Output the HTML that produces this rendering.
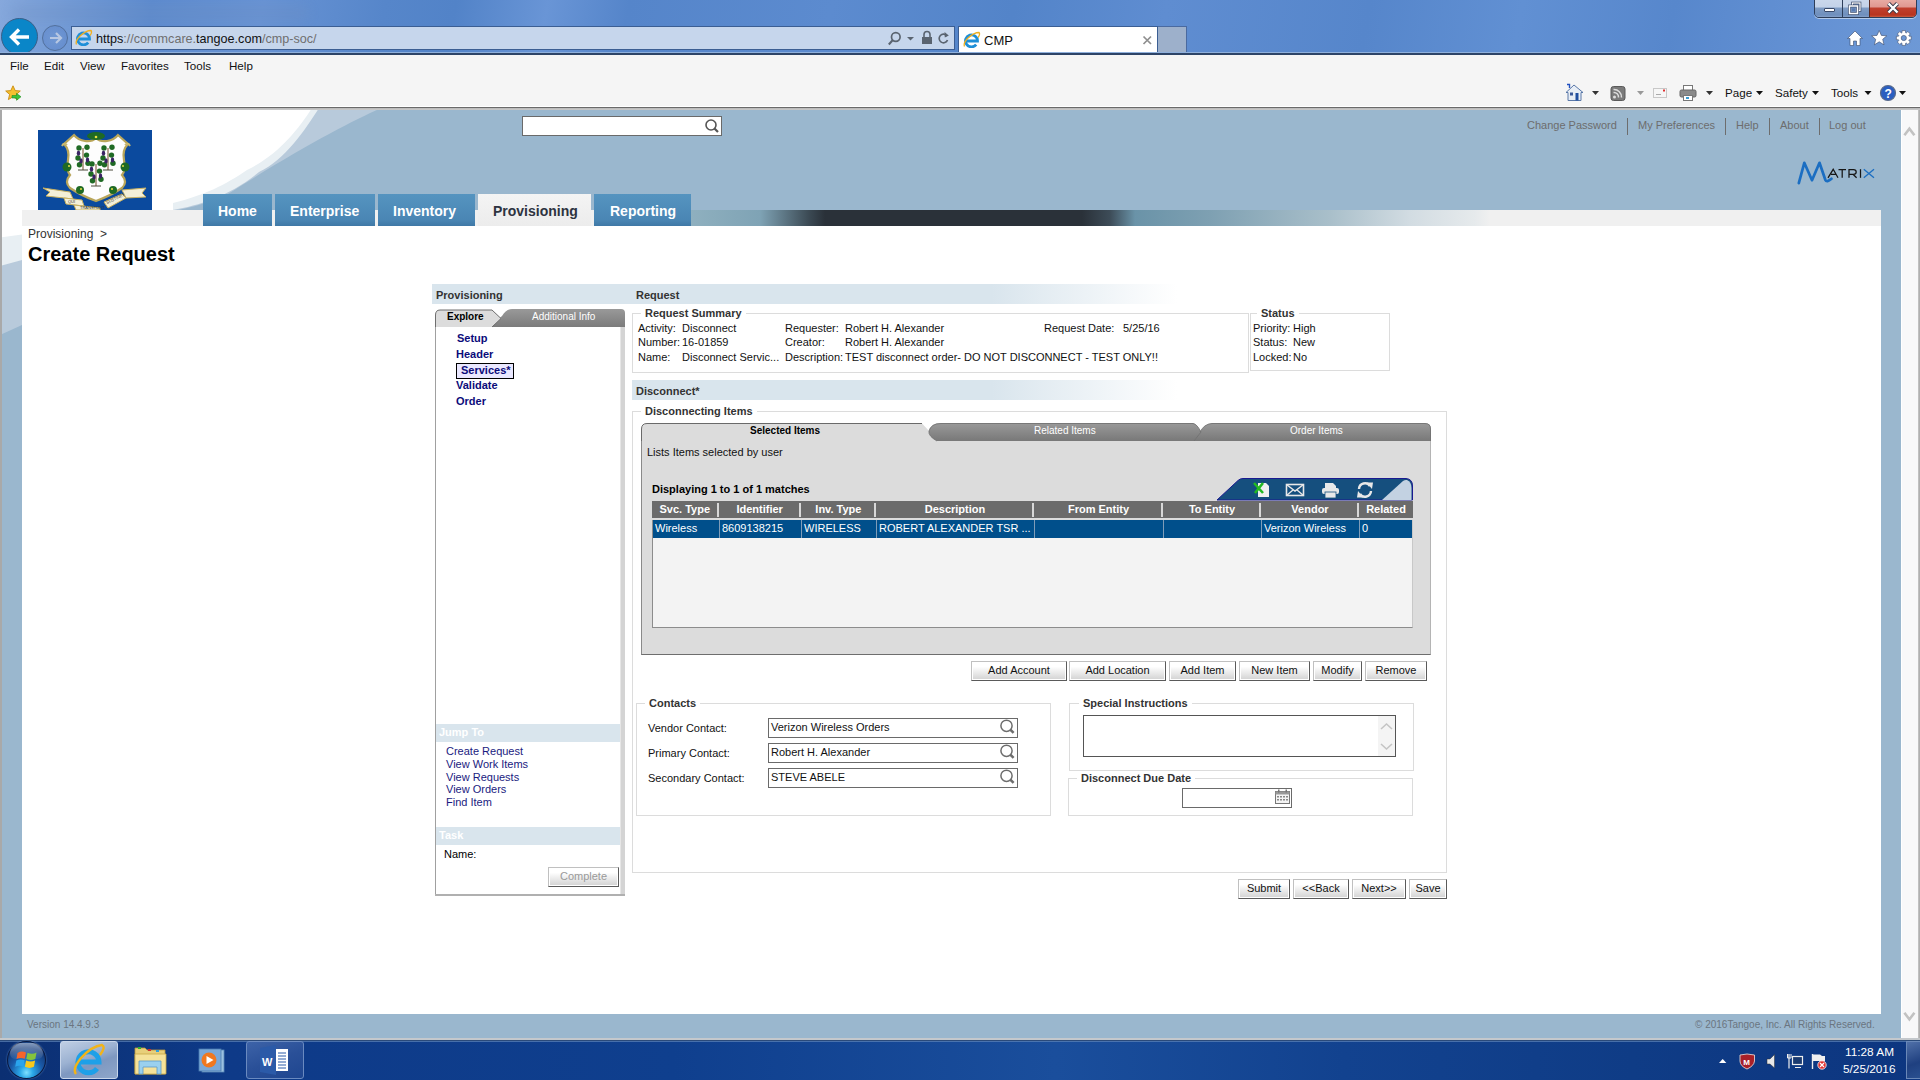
<!DOCTYPE html>
<html><head><meta charset="utf-8">
<style>
*{margin:0;padding:0;box-sizing:border-box}
html,body{width:1920px;height:1080px;overflow:hidden;background:#fff;font-family:"Liberation Sans",sans-serif;font-size:11px;color:#000}
.a{position:absolute}
.t{position:absolute;white-space:nowrap;line-height:1}
.fs{position:absolute;border:1px solid #dcdcdc}
.lg{position:absolute;white-space:nowrap;line-height:1;background:#fff;padding:0 4px;font-size:11px;font-weight:bold;color:#333}
.btn{position:absolute;border:1px solid;border-color:#c0c0c0 #5a5a5a #5a5a5a #c0c0c0;background:linear-gradient(#fff 0,#fff 25%,#d2d2d2 100%);box-shadow:inset 1px 1px 0 #fff,inset -1px -1px 0 #fff;font-size:11px;color:#111;text-align:center;white-space:nowrap;line-height:17px}
</style></head><body>
<!-- ============ IE CHROME ============ -->
<div class="a" style="left:0;top:0;width:1920px;height:54px;background:linear-gradient(100deg,#86a8dc 0px,#729ad5 70px,#5d8bce 150px,#6893d4 260px,#5686ca 380px,#5283c8 450px,#6995d6 540px,#5585ca 620px,#5c8bcf 820px,#5384c9 1000px,#5f8dd1 1150px,#5686cb 1350px,#6190d3 1500px,#5787cc 1650px,#6592d4 1800px,#6f9ad6 1920px)"></div>
<div class="a" style="left:10px;top:4px;width:300px;height:18px;border-radius:9px;background:rgba(110,140,190,.22);filter:blur(5px)"></div>
<!-- address bar -->
<div class="a" style="left:71px;top:26px;width:884px;height:24px;background:#c6d6ec;border:1px solid #3b5e93"></div>
<svg class="a" style="left:75px;top:29px" width="18" height="17" viewBox="0 0 18 17">
  <path d="M3.5 10 H14.5 A6 6 0 1 0 13.2 13.6" fill="none" stroke="#1e8fd8" stroke-width="2.8"/>
  <path d="M1.5 15.5 Q0 12 5 7 Q11 1.5 16 1.5 Q17.5 3 15 6.5" fill="none" stroke="#f0b020" stroke-width="1.3"/>
</svg>
<div class="t" style="left:96px;top:33px;font-size:12.6px;color:#6f6f6f"><span style="color:#111">https</span>://commcare.<span style="color:#111">tangoe.com</span>/cmp-soc/</div>
<svg class="a" style="left:885px;top:30px" width="65" height="17" viewBox="885 30 65 17">
  <circle cx="895.8" cy="37" r="4.3" fill="none" stroke="#5a6470" stroke-width="1.7"/>
  <path d="M892.8 40 L888.8 44.5" stroke="#5a6470" stroke-width="2"/>
  <path d="M907 37 H914 L910.5 40.5 Z" fill="#5a6470"/>
  <path d="M924 37 V34.5 A3 3 0 0 1 930 34.5 V37" fill="none" stroke="#5a6470" stroke-width="1.6"/>
  <rect x="922" y="37" width="10" height="7" fill="#5a6470"/>
  <path d="M947 36 A4.3 4.3 0 1 0 947.5 40" fill="none" stroke="#5a6470" stroke-width="1.7"/>
  <path d="M944.5 32 L948.8 35.5 L944.8 37.5 Z" fill="#5a6470"/>
</svg>
<!-- tab -->
<div class="a" style="left:958px;top:26px;width:200px;height:28px;background:#fff;border:1px solid #3b5e93;border-bottom:none"></div>
<svg class="a" style="left:963px;top:31px" width="18" height="17" viewBox="0 0 18 17">
  <path d="M3.5 10 H14.5 A6 6 0 1 0 13.2 13.6" fill="none" stroke="#1e8fd8" stroke-width="2.8"/>
  <path d="M1.5 15.5 Q0 12 5 7 Q11 1.5 16 1.5 Q17.5 3 15 6.5" fill="none" stroke="#f0b020" stroke-width="1.3"/>
</svg>
<div class="t" style="left:984px;top:34px;font-size:13px;color:#111">CMP</div>
<svg class="a" style="left:1142px;top:35px" width="11" height="11" viewBox="0 0 11 11"><path d="M1.5 1.5 L9 9 M9 1.5 L1.5 9" stroke="#8f8f8f" stroke-width="1.7"/></svg>
<div class="a" style="left:1158px;top:26px;width:29px;height:28px;background:#9db0cb;border:1px solid #4a6aa0;border-left:none;border-bottom:none"></div>
<!-- back/forward -->
<div class="a" style="left:1px;top:18px;width:37px;height:37px;border-radius:50%;background:#0a86c8;border:1px solid #3a5f88;clip-path:inset(0 0 2px 0)"></div>
<svg class="a" style="left:8px;top:27px" width="24" height="20" viewBox="0 0 24 20"><path d="M11 2.5 L3.5 10 L11 17.5 M3.5 10 H21" stroke="#fff" stroke-width="3.4" fill="none" stroke-linejoin="miter"/></svg>
<div class="a" style="left:42px;top:25px;width:26px;height:26px;border-radius:50%;background:radial-gradient(circle at 50% 50%,rgba(110,150,210,.7),rgba(90,130,200,.6));border:1px solid #52709c"></div>
<svg class="a" style="left:48px;top:31px" width="16" height="14" viewBox="0 0 16 14"><path d="M8 2 L13 7 L8 12 M2 7 H13" stroke="#b7c7e2" stroke-width="2.2" fill="none"/></svg>
<!-- window controls -->
<div class="a" style="left:1814px;top:-3px;width:103px;height:21px;border:1px solid #2d3e5a;border-radius:0 0 5px 5px;overflow:hidden;box-shadow:0 1px 0 rgba(255,255,255,.5)">
  <div class="a" style="left:0;top:0;width:28px;height:20px;background:linear-gradient(#cbd8ec 0,#c3d2e8 45%,#7f9cc4 50%,#6f8fbd 85%,#90aad0 100%);border-right:1px solid #2d3e5a"></div>
  <div class="a" style="left:28px;top:0;width:27px;height:20px;background:linear-gradient(#cbd8ec 0,#c3d2e8 45%,#7f9cc4 50%,#6f8fbd 85%,#90aad0 100%);border-right:1px solid #5a2a20"></div>
  <div class="a" style="left:55px;top:0;width:48px;height:20px;background:linear-gradient(#eab0a8 0,#e09890 45%,#c0402e 50%,#b83420 85%,#d07050 100%)"></div>
</div>
<div class="a" style="left:1824px;top:8px;width:11px;height:4px;background:#fff;border:1px solid #3a4a6a;border-radius:1px"></div>
<svg class="a" style="left:1847px;top:0px" width="16" height="16" viewBox="0 0 16 16"><rect x="5.5" y="3" width="7.5" height="7.5" fill="#7a96c0" stroke="#3a4a6a" stroke-width="2.6"/><rect x="5.5" y="3" width="7.5" height="7.5" fill="none" stroke="#fff" stroke-width="1.2"/><rect x="2.5" y="6" width="8" height="7.5" fill="#6f8fbd" stroke="#3a4a6a" stroke-width="2.8"/><rect x="2.5" y="6" width="8" height="7.5" fill="none" stroke="#fff" stroke-width="1.5"/><rect x="5" y="8.5" width="3" height="2.5" fill="#5a7ab0"/></svg>
<svg class="a" style="left:1886px;top:1px" width="14" height="14" viewBox="0 0 14 14"><path d="M2.5 2.5 L11.5 11.5 M11.5 2.5 L2.5 11.5" stroke="#3a3a4a" stroke-width="4.2"/><path d="M2.5 2.5 L11.5 11.5 M11.5 2.5 L2.5 11.5" stroke="#fff" stroke-width="2.4"/></svg>
<!-- home/star/gear -->
<svg class="a" style="left:1846px;top:29px" width="68" height="18" viewBox="1846 29 68 18">
  <path d="M1855 31 L1847.5 38.5 H1850 V45.5 H1853.5 V41 H1856.5 V45.5 H1860 V38.5 H1862.5 Z" fill="#fff" stroke="#3a4a6a" stroke-width="0.6"/>
  <path d="M1879.2 30.5 L1881.4 35.4 L1886.8 35.8 L1882.7 39.3 L1884 44.8 L1879.2 41.8 L1874.4 44.8 L1875.7 39.3 L1871.6 35.8 L1877 35.4 Z" fill="#fff" stroke="#3a4a6a" stroke-width="0.6"/>
  <path d="M1909.09 36.18 L1911.21 36.29 L1911.21 39.71 L1909.09 39.82 L1908.83 40.45 L1910.25 42.03 L1907.83 44.45 L1906.25 43.03 L1905.62 43.29 L1905.51 45.41 L1902.09 45.41 L1901.98 43.29 L1901.35 43.03 L1899.77 44.45 L1897.35 42.03 L1898.77 40.45 L1898.51 39.82 L1896.39 39.71 L1896.39 36.29 L1898.51 36.18 L1898.77 35.55 L1897.35 33.97 L1899.77 31.55 L1901.35 32.97 L1901.98 32.71 L1902.09 30.59 L1905.51 30.59 L1905.62 32.71 L1906.25 32.97 L1907.83 31.55 L1910.25 33.97 L1908.83 35.55 Z M1906.40 38 A2.6 2.6 0 1 0 1901.20 38 A2.6 2.6 0 1 0 1906.40 38 Z" fill="#fff" fill-rule="evenodd" stroke="#3a4a6a" stroke-width="0.6"/>
</svg>
<!-- chrome bottom line -->
<div class="a" style="left:0;top:52px;width:1920px;height:1px;background:#8fb0dc"></div>
<div class="a" style="left:0;top:53px;width:1920px;height:2px;background:#2d4467"></div>
<!-- menubar + commandbar -->
<div class="a" style="left:0;top:55px;width:1920px;height:51px;background:#f5f5f5"></div>
<div class="a" style="left:0;top:106px;width:1920px;height:1px;background:#fff"></div>
<div class="a" style="left:0;top:107px;width:1920px;height:1px;background:#6a6a6a"></div>
<div class="t" style="left:10px;top:60px;font-size:11.6px;color:#111">File</div>
<div class="t" style="left:44px;top:60px;font-size:11.6px;color:#111">Edit</div>
<div class="t" style="left:80px;top:60px;font-size:11.6px;color:#111">View</div>
<div class="t" style="left:121px;top:60px;font-size:11.6px;color:#111">Favorites</div>
<div class="t" style="left:184px;top:60px;font-size:11.6px;color:#111">Tools</div>
<div class="t" style="left:229px;top:60px;font-size:11.6px;color:#111">Help</div>
<svg class="a" style="left:5px;top:85px" width="18" height="17" viewBox="0 0 18 17">
  <path d="M8 0.8 L10.2 5.6 L15.3 6 L11.4 9.4 L12.6 14.6 L8 11.8 L3.4 14.6 L4.6 9.4 L0.7 6 L5.8 5.6 Z" fill="#f5c030" stroke="#c88a10" stroke-width="0.9"/>
  <path d="M7 10.5 H11.5 V8.3 L16 11.8 L11.5 15.3 V13 H7 Z" fill="#3cc33c" stroke="#1f8f1f" stroke-width="0.6"/>
</svg>
<!-- command bar icons -->
<svg class="a" style="left:1560px;top:82px" width="360" height="22" viewBox="1560 82 360 22">
  <path d="M1574 85 L1566 92.5 H1568 V100.5 H1581 V92.5 H1583 Z" fill="#e8eef6" stroke="#5a78a8" stroke-width="1"/>
  <rect x="1570" y="92.5" width="3" height="3" fill="#3a5a9a"/><rect x="1575.5" y="93" width="3" height="7.5" fill="#1f4fa0"/>
  <path d="M1567 84.5 L1569.5 84.5 L1569.5 88" stroke="#2050c0" stroke-width="1.4" fill="none"/>
  <path d="M1592 91 H1599 L1595.5 95 Z" fill="#333"/>
  <rect x="1611" y="86.5" width="14" height="14" rx="2.5" fill="#7a7a7a" stroke="#5a5a5a"/>
  <circle cx="1614.5" cy="97" r="1.5" fill="#ddd"/><path d="M1613.5 92.5 A4.5 4.5 0 0 1 1618.5 97.5 M1613.5 89.5 A7.5 7.5 0 0 1 1621.5 97.5" fill="none" stroke="#ddd" stroke-width="1.5"/>
  <path d="M1637 91 H1644 L1640.5 95 Z" fill="#999"/>
  <rect x="1653.5" y="88.5" width="13" height="9" fill="#f6f6f6" stroke="#c8c8c8"/><path d="M1656 94.5 H1661" stroke="#aaa"/><rect x="1663" y="89.5" width="2" height="2" fill="#e03030"/>
  <rect x="1683.5" y="85.5" width="9" height="5" fill="#fff" stroke="#777"/>
  <rect x="1680" y="90" width="16" height="7" rx="1.5" fill="#8a8a8a" stroke="#666"/>
  <rect x="1683.5" y="95.5" width="9" height="5" fill="#fff" stroke="#777"/><rect x="1686" y="97" width="3" height="2" fill="#3a9ad0"/>
  <path d="M1706 91 H1713 L1709.5 95 Z" fill="#333"/>
  <path d="M1756 91 H1763 L1759.5 95 Z" fill="#111"/>
  <path d="M1812 91 H1819 L1815.5 95 Z" fill="#111"/>
  <path d="M1864.5 91 H1871.5 L1868 95 Z" fill="#111"/>
  <circle cx="1888" cy="93" r="7.5" fill="#2a5ec0" stroke="#5a6a8a" stroke-width="1.2"/>
  <text x="1884.6" y="97.5" font-family="Liberation Sans" font-size="12" font-weight="bold" fill="#fff">?</text>
  <path d="M1899 91 H1906 L1902.5 95 Z" fill="#111"/>
</svg>
<div class="t" style="left:1725px;top:87px;font-size:11.6px;color:#111">Page</div>
<div class="t" style="left:1775px;top:87px;font-size:11.6px;color:#111">Safety</div>
<div class="t" style="left:1831px;top:87px;font-size:11.6px;color:#111">Tools</div>

<!-- ============ PAGE ============ -->
<div class="a" id="page" style="left:0;top:108px;width:1901px;height:932px;background:#9ab7ce;overflow:hidden">
  <svg class="a" style="left:0;top:0" width="1901" height="932" viewBox="0 108 1901 932">
    <path d="M0 108 H381 C350 122 300 148 228 194 C215 201 190 208 173 211 L22 325 L0 335 Z" fill="#b8cadb"/>
    <path d="M0 108 H319 C305 130 285 160 259 172 C230 196 200 205 173 210 L22 260 L0 266 Z" fill="#e8eff3"/>
    <path d="M0 108 H312 C298 130 278 155 247 170 C225 185 205 195 173 203 L173 211 L22 234.5 L0 237.5 Z" fill="#fff"/>
  </svg>
  <div class="a" style="left:0;top:0;width:2px;height:932px;background:#a9a9a9"></div>
  <!-- logo -->
  <svg class="a" style="left:38px;top:22px" width="114" height="80" viewBox="0 0 114 80">
    <rect width="114" height="80" fill="#0b4a9e"/>
    <path d="M36 5 Q40 10 47 11 Q54 12 58 8 Q62 12 69 11 Q76 10 80 5 L90 14 Q84 20 86 30 Q88 40 84 45 Q90 52 84 58 Q72 66 58 71 Q44 66 32 58 Q26 52 32 45 Q28 40 30 30 Q32 20 26 14 Z" fill="#fdfdfd" stroke="#b9a65a" stroke-width="2.2"/>
    <path d="M24 16 Q26 12 29 15 M92 16 Q90 12 87 15" stroke="#c8b870" stroke-width="2" fill="none"/>
    <g fill="#1f6a24">
      <ellipse cx="58" cy="6" rx="9" ry="4"/>
      <circle cx="29" cy="37" r="4.5"/><circle cx="87" cy="37" r="4.5"/>
      <circle cx="42" cy="60" r="4"/><circle cx="75" cy="60" r="4"/>
    </g>
    <g fill="#e8e040"><circle cx="58" cy="7" r="1.3"/><circle cx="31" cy="36" r="1"/><circle cx="85" cy="36" r="1"/><circle cx="43" cy="59" r="1"/><circle cx="74" cy="59" r="1"/></g>
    <path d="M45 40 V18" stroke="#8a6a4a" stroke-width="1.2"/><path d="M40 40 H50" stroke="#4a4a3a" stroke-width="1"/><circle cx="41" cy="17.9" r="2.7" fill="#1f6a24"/><circle cx="49" cy="17.2" r="2.7" fill="#1f6a24"/><circle cx="40" cy="28.0" r="2.7" fill="#1f6a24"/><circle cx="48.5" cy="25.1" r="2.7" fill="#1f6a24"/><circle cx="50" cy="33.3" r="2.7" fill="#1f6a24"/><circle cx="41.5" cy="34.7" r="2.7" fill="#1f6a24"/><ellipse cx="40.5" cy="23.2" rx="1.7" ry="2.6" fill="#3a2464"/><ellipse cx="49.5" cy="29.9" rx="1.7" ry="2.6" fill="#3a2464"/><ellipse cx="43" cy="30.9" rx="1.7" ry="2.6" fill="#3a2464"/><path d="M70 40 V18" stroke="#8a6a4a" stroke-width="1.2"/><path d="M65 40 H75" stroke="#4a4a3a" stroke-width="1"/><circle cx="66" cy="17.9" r="2.7" fill="#1f6a24"/><circle cx="74" cy="17.2" r="2.7" fill="#1f6a24"/><circle cx="65" cy="28.0" r="2.7" fill="#1f6a24"/><circle cx="73.5" cy="25.1" r="2.7" fill="#1f6a24"/><circle cx="75" cy="33.3" r="2.7" fill="#1f6a24"/><circle cx="66.5" cy="34.7" r="2.7" fill="#1f6a24"/><ellipse cx="65.5" cy="23.2" rx="1.7" ry="2.6" fill="#3a2464"/><ellipse cx="74.5" cy="29.9" rx="1.7" ry="2.6" fill="#3a2464"/><ellipse cx="68" cy="30.9" rx="1.7" ry="2.6" fill="#3a2464"/><path d="M58 56 V34" stroke="#8a6a4a" stroke-width="1.2"/><path d="M53 56 H63" stroke="#4a4a3a" stroke-width="1"/><circle cx="54" cy="33.9" r="2.7" fill="#1f6a24"/><circle cx="62" cy="33.2" r="2.7" fill="#1f6a24"/><circle cx="53" cy="44.0" r="2.7" fill="#1f6a24"/><circle cx="61.5" cy="41.1" r="2.7" fill="#1f6a24"/><circle cx="63" cy="49.3" r="2.7" fill="#1f6a24"/><circle cx="54.5" cy="50.7" r="2.7" fill="#1f6a24"/><ellipse cx="53.5" cy="39.2" rx="1.7" ry="2.6" fill="#3a2464"/><ellipse cx="62.5" cy="45.9" rx="1.7" ry="2.6" fill="#3a2464"/><ellipse cx="56" cy="46.9" rx="1.7" ry="2.6" fill="#3a2464"/>
    <path d="M5 58 L32 62 L35 69 L8 66 L12 62 Z" fill="#f4efd8" stroke="#c8b060" stroke-width="1"/>
    <path d="M26 68 L44 70 L46 76 L28 74 Z" fill="#f4efd8" stroke="#c8b060" stroke-width="1"/>
    <path d="M36 75 L62 78 L62 80 L38 80 Z" fill="#f4efd8" stroke="#c8b060" stroke-width="1"/>
    <path d="M66 72 L84 64 L88 68 L70 78 Z" fill="#f4efd8" stroke="#c8b060" stroke-width="1"/>
    <path d="M84 60 L108 58 L104 63 L108 67 L88 68 Z" fill="#f4efd8" stroke="#c8b060" stroke-width="1"/>
    <g fill="#333" font-family="Liberation Sans" font-size="4"><text x="30" y="73">QUI</text><text x="42" y="79">TRANSTULIT</text><text x="69" y="74" transform="rotate(-25 69 74)">SUSTINET</text></g>
  </svg>
  <!-- search -->
  <div class="a" style="left:522px;top:8px;width:200px;height:20px;background:#fff;border:1px solid #6a6a6a"></div>
  <svg class="a" style="left:704px;top:10px" width="16" height="16" viewBox="0 0 16 16"><circle cx="7" cy="7" r="5" stroke="#555" stroke-width="1.6" fill="none"/><path d="M10.5 10.5 L14 14" stroke="#555" stroke-width="2.2"/></svg>
  <!-- header links -->
  <div class="t" style="left:1527px;top:12px;font-size:11px;color:#6d6d6d">Change Password</div>
  <div class="a" style="left:1627px;top:10px;width:1px;height:17px;background:#6d6d6d"></div>
  <div class="t" style="left:1638px;top:12px;font-size:11px;color:#6d6d6d">My Preferences</div>
  <div class="a" style="left:1725px;top:10px;width:1px;height:17px;background:#6d6d6d"></div>
  <div class="t" style="left:1736px;top:12px;font-size:11px;color:#6d6d6d">Help</div>
  <div class="a" style="left:1769px;top:10px;width:1px;height:17px;background:#6d6d6d"></div>
  <div class="t" style="left:1780px;top:12px;font-size:11px;color:#6d6d6d">About</div>
  <div class="a" style="left:1819px;top:10px;width:1px;height:17px;background:#6d6d6d"></div>
  <div class="t" style="left:1829px;top:12px;font-size:11px;color:#6d6d6d">Log out</div>
  <!-- matrix logo -->
  <svg class="a" style="left:1796px;top:52px" width="80" height="26" viewBox="1796 160 80 26">
    <path d="M1798.8 183.2 L1804.3 162.8 L1812 180.2 L1819.5 162.8 L1825.3 179.8 Q1826.8 182.8 1831.5 178.8" stroke="#1b6ec2" stroke-width="2.7" fill="none" stroke-linejoin="round" stroke-linecap="round"/>
    <g stroke="#151515" stroke-width="1.25" fill="none">
      <path d="M1828 177.8 L1833.2 169.3 L1838 177.8 M1831 174.3 H1836"/>
      <path d="M1838.5 169.7 H1846 M1842.2 169.7 V177.8"/>
      <path d="M1849 177.8 V169.7 H1853.5 Q1856.2 169.7 1856.2 172 Q1856.2 174.3 1853.5 174.3 H1849 M1853 174.3 L1856.6 177.8"/>
      <path d="M1860.5 169.2 V177.8"/>
    </g>
    <path d="M1863.8 169.2 L1874 177.8 M1874 169.2 L1863.8 177.8" stroke="#1b6ec2" stroke-width="1.3"/>
  </svg>
  <!-- content panel -->
  <div class="a" style="left:22px;top:102px;width:1859px;height:804px;background:#fff"></div>
  <div class="a" style="left:22px;top:102px;width:1859px;height:16px;background:#f0f0f0"></div>
  <div class="a" style="left:690px;top:102px;width:1191px;height:16px;background:linear-gradient(90deg,#8fb0bf 0px,#7fa3b5 70px,#3a4852 120px,#2a3139 135px,#2a3139 392px,#3d4c58 420px,#6a93a8 445px,#7ea0b2 520px,#a9bfca 640px,#d2dce2 720px,#e6eaec 785px,#f0f0f0 800px)"></div>
  <!-- nav tabs -->
  <div class="a" style="left:203px;top:86px;width:69px;height:32px;background:linear-gradient(#5594c0,#4a86b4 80%,#3f78a6)"></div>
  <div class="a" style="left:275px;top:86px;width:100px;height:32px;background:linear-gradient(#5594c0,#4a86b4 80%,#3f78a6)"></div>
  <div class="a" style="left:378px;top:86px;width:97px;height:32px;background:linear-gradient(#5594c0,#4a86b4 80%,#3f78a6)"></div>
  <div class="a" style="left:478px;top:86px;width:113px;height:32px;background:linear-gradient(#f4f4f4,#ececec)"></div>
  <div class="a" style="left:594px;top:86px;width:97px;height:32px;background:linear-gradient(#5594c0,#4a86b4 80%,#3f78a6)"></div>
  <div class="t" style="left:218px;top:96px;font-size:14px;font-weight:bold;color:#fff">Home</div>
  <div class="t" style="left:290px;top:96px;font-size:14px;font-weight:bold;color:#fff">Enterprise</div>
  <div class="t" style="left:393px;top:96px;font-size:14px;font-weight:bold;color:#fff">Inventory</div>
  <div class="t" style="left:493px;top:96px;font-size:14px;font-weight:bold;color:#2d3340">Provisioning</div>
  <div class="t" style="left:610px;top:96px;font-size:14px;font-weight:bold;color:#fff">Reporting</div>
  <!-- breadcrumb / title -->
  <div class="t" style="left:28px;top:120px;font-size:12px;color:#333">Provisioning&nbsp;&nbsp;&gt;</div>
  <div class="t" style="left:28px;top:136px;font-size:20px;font-weight:bold;color:#000">Create Request</div>
  <!-- footer -->
  <div class="t" style="left:27px;top:912px;font-size:10px;color:#6a7580">Version 14.4.9.3</div>
  <div class="t" style="left:1695px;top:912px;font-size:10px;color:#6a7580">&copy; 2016Tangoe, Inc. All Rights Reserved.</div>
</div>


<!-- ============ MAIN CONTENT (screen coords) ============ -->
<div class="a" style="left:432px;top:284px;width:745px;height:20px;background:linear-gradient(90deg,#d9e5ed 0,#d9e5ed 560px,#fff 745px)"></div>
<div class="t" style="left:436px;top:290px;font-size:11px;font-weight:bold;color:#333">Provisioning</div>
<div class="t" style="left:636px;top:290px;font-size:11px;font-weight:bold;color:#333">Request</div>
<!-- left panel tabs -->
<svg class="a" style="left:434px;top:308px" width="192" height="20" viewBox="434 308 192 20">
  <defs><linearGradient id="tg" x1="0" y1="0" x2="0" y2="1"><stop offset="0" stop-color="#999"/><stop offset="1" stop-color="#7b7b7b"/></linearGradient></defs>
  <path d="M489 327 L502 316 Q506 309 512 309 L621 309 Q625 309 625 313 L625 327 Z" fill="url(#tg)"/>
  <path d="M435.5 327 L435.5 315 Q435.5 310 440 310 L492 310 L501 318.5 L492 327 Z" fill="#dcdcdc"/>
  <path d="M435.5 327 L435.5 315 Q435.5 310 440 310 L492 310 L501 318.5 L492 327" fill="none" stroke="#6e6e6e" stroke-width="1"/>
</svg>
<div class="t" style="left:447px;top:312px;font-size:10px;font-weight:bold;color:#000">Explore</div>
<div class="t" style="left:532px;top:312px;font-size:10px;color:#fff">Additional Info</div>
<!-- left panel body -->
<div class="a" style="left:435px;top:327px;width:1px;height:569px;background:#a0a0a0"></div>
<div class="a" style="left:620px;top:327px;width:5px;height:569px;background:#d4d4d4;border-left:1px solid #e6e6e6"></div>
<div class="a" style="left:435px;top:894px;width:190px;height:2px;background:#b0b0b0"></div>
<div class="t" style="left:457px;top:333px;font-size:11px;font-weight:bold;color:#0b0b7a">Setup</div>
<div class="t" style="left:456px;top:349px;font-size:11px;font-weight:bold;color:#0b0b7a">Header</div>
<div class="a" style="left:456px;top:363px;width:58px;height:16px;background:#eae8ff;border:1.5px solid #000"></div>
<div class="t" style="left:461px;top:365px;font-size:11px;font-weight:bold;color:#0b0b7a">Services*</div>
<div class="t" style="left:456px;top:380px;font-size:11px;font-weight:bold;color:#0b0b7a">Validate</div>
<div class="t" style="left:456px;top:396px;font-size:11px;font-weight:bold;color:#0b0b7a">Order</div>
<div class="a" style="left:436px;top:724px;width:184px;height:18px;background:#d9e5ed"></div>
<div class="t" style="left:439px;top:727px;font-size:11px;font-weight:bold;color:#fff">Jump To</div>
<div class="t" style="left:446px;top:746px;font-size:11px;color:#1a1a80">Create Request</div>
<div class="t" style="left:446px;top:759px;font-size:11px;color:#1a1a80">View Work Items</div>
<div class="t" style="left:446px;top:772px;font-size:11px;color:#1a1a80">View Requests</div>
<div class="t" style="left:446px;top:784px;font-size:11px;color:#1a1a80">View Orders</div>
<div class="t" style="left:446px;top:797px;font-size:11px;color:#1a1a80">Find Item</div>
<div class="a" style="left:436px;top:827px;width:184px;height:18px;background:#d9e5ed"></div>
<div class="t" style="left:439px;top:830px;font-size:11px;font-weight:bold;color:#fff">Task</div>
<div class="t" style="left:444px;top:849px;font-size:11px;color:#000">Name:</div>
<div class="btn" style="left:548px;top:867px;width:71px;height:20px;color:#9a9a9a">Complete</div>

<!-- request summary -->
<div class="fs" style="left:632px;top:313px;width:617px;height:60px"></div>
<div class="lg" style="left:641px;top:308px">Request Summary</div>
<div class="t" style="left:638px;top:323px;font-size:11px;color:#111">Activity:</div>
<div class="t" style="left:638px;top:337px;font-size:11px;color:#111">Number:</div>
<div class="t" style="left:638px;top:352px;font-size:11px;color:#111">Name:</div>
<div class="t" style="left:682px;top:323px;font-size:11px;color:#111">Disconnect</div>
<div class="t" style="left:682px;top:337px;font-size:11px;color:#111">16-01859</div>
<div class="t" style="left:682px;top:352px;font-size:11px;color:#111">Disconnect Servic...</div>
<div class="t" style="left:785px;top:323px;font-size:11px;color:#111">Requester:</div>
<div class="t" style="left:785px;top:337px;font-size:11px;color:#111">Creator:</div>
<div class="t" style="left:785px;top:352px;font-size:11px;color:#111">Description:</div>
<div class="t" style="left:845px;top:323px;font-size:11px;color:#111">Robert H. Alexander</div>
<div class="t" style="left:845px;top:337px;font-size:11px;color:#111">Robert H. Alexander</div>
<div class="t" style="left:845px;top:352px;font-size:11px;color:#111">TEST disconnect order- DO NOT DISCONNECT - TEST ONLY!!</div>
<div class="t" style="left:1044px;top:323px;font-size:11px;color:#111">Request Date:</div>
<div class="t" style="left:1123px;top:323px;font-size:11px;color:#111">5/25/16</div>
<div class="t" style="left:1253px;top:323px;font-size:11px;color:#111">Priority:</div>
<div class="t" style="left:1253px;top:337px;font-size:11px;color:#111">Status:</div>
<div class="t" style="left:1253px;top:352px;font-size:11px;color:#111">Locked:</div>
<div class="t" style="left:1293px;top:323px;font-size:11px;color:#111">High</div>
<div class="t" style="left:1293px;top:337px;font-size:11px;color:#111">New</div>
<div class="t" style="left:1293px;top:352px;font-size:11px;color:#111">No</div>
<div class="fs" style="left:1250px;top:313px;width:140px;height:58px"></div>
<div class="lg" style="left:1257px;top:308px">Status</div>

<!-- disconnect bar -->
<div class="a" style="left:632px;top:380px;width:545px;height:20px;background:linear-gradient(90deg,#d9e5ed 0,#d9e5ed 360px,#fff 545px)"></div>
<div class="t" style="left:636px;top:386px;font-size:11px;font-weight:bold;color:#333">Disconnect*</div>


<!-- disconnecting items fieldset -->
<div class="fs" style="left:632px;top:411px;width:815px;height:462px"></div>
<div class="lg" style="left:641px;top:406px">Disconnecting Items</div>
<!-- tab panel -->
<div class="a" style="left:641px;top:440px;width:790px;height:215px;background:#dcdcdc;border-left:1px solid #8a8a8a;border-bottom:1px solid #6e6e6e;border-right:1px solid #b4b4b4"></div>
<svg class="a" style="left:640px;top:422px" width="792" height="20" viewBox="640 422 792 20">
  <defs><linearGradient id="tg2" x1="0" y1="0" x2="0" y2="1"><stop offset="0" stop-color="#9a9a9a"/><stop offset="1" stop-color="#787878"/></linearGradient></defs>
  <path d="M641.5 441 L641.5 429 Q641.5 423.5 647 423.5 L922 423.5 L931 433 L936 441 Z" fill="#dcdcdc"/>
  <path d="M641.5 441 L641.5 429 Q641.5 423.5 647 423.5 L922 423.5" fill="none" stroke="#6a6a6a" stroke-width="1"/>
  <path d="M937 441 Q928 436 929 431 Q931 423 941 423 L1193 423 Q1197 424 1201 432 L1194 441 Z" fill="url(#tg2)"/>
  <path d="M1193 441 L1200 432 Q1204 424 1212 423 L1425 423 Q1431 423 1431 429 L1431 441 Z" fill="url(#tg2)"/>
  <path d="M937 441 Q928 436 929 431 Q931 423.5 941 423.5 L1193 423.5 Q1197 424 1201 432 L1194 441" fill="none" stroke="#707070" stroke-width="0.8"/>
  <path d="M1200 432 Q1204 424 1212 423.5 L1425 423.5 Q1430.5 423.5 1430.5 429 L1430.5 441" fill="none" stroke="#707070" stroke-width="0.8"/>
</svg>
<div class="t" style="left:750px;top:426px;font-size:10px;font-weight:bold;color:#000">Selected Items</div>
<div class="t" style="left:1034px;top:426px;font-size:10px;color:#fff">Related Items</div>
<div class="t" style="left:1290px;top:426px;font-size:10px;color:#fff">Order Items</div>
<div class="t" style="left:647px;top:447px;font-size:11px;color:#111">Lists Items selected by user</div>
<div class="t" style="left:652px;top:484px;font-size:11px;font-weight:bold;color:#000">Displaying 1 to 1 of 1 matches</div>
<!-- toolbar -->
<svg class="a" style="left:1215px;top:476px" width="200" height="26" viewBox="1215 476 200 26">
  <path d="M1217 500 L1238 480.5 Q1240 478.5 1243 478.5 L1406 478.5 Q1412.5 479 1412.5 486 L1412.5 500 Z" fill="#154f7e" stroke="#1a1a90" stroke-width="1"/>
  <path d="M1382 500 L1403 481 Q1405 479.5 1407 480 Q1411.5 482 1411.5 488 L1411.5 500 Z" fill="#c3d2e2"/>
  <!-- excel -->
  <path d="M1258 483 H1266 L1269 486 V497 H1258 Z" fill="#f0f0f0"/>
  <path d="M1254 483 L1263 493 M1263 483 L1255 493" stroke="#22b922" stroke-width="2.6"/>
  <!-- mail -->
  <rect x="1286.5" y="484.5" width="17" height="11" fill="none" stroke="#e8e8e8" stroke-width="1.6"/>
  <path d="M1286.5 484.5 L1295 491 L1303.5 484.5 M1286.5 495.5 L1293 490 M1303.5 495.5 L1297 490" stroke="#e8e8e8" stroke-width="1.4" fill="none"/>
  <!-- print -->
  <path d="M1325 483 H1333 L1336 486 V489 H1325 Z" fill="#e8e8e8"/>
  <rect x="1322" y="488" width="17" height="6" rx="2" fill="#e8e8e8"/>
  <rect x="1325" y="492" width="11" height="6" fill="#e8e8e8" stroke="#154f7e" stroke-width="0.8"/>
  <!-- refresh -->
  <path d="M1359 489 A6 6 0 0 1 1370 486" stroke="#e8e8e8" stroke-width="2.4" fill="none"/>
  <path d="M1371 491 A6 6 0 0 1 1360 494" stroke="#e8e8e8" stroke-width="2.4" fill="none"/>
  <path d="M1366.5 482.5 L1373 482.5 L1372 489 Z" fill="#e8e8e8"/>
  <path d="M1363.5 497.5 L1357 497.5 L1358 491 Z" fill="#e8e8e8"/>
</svg>
<!-- grid -->
<div class="a" style="left:652px;top:501px;width:761px;height:127px;background:#f3f3f3;border-left:1px solid #8c8c8c;border-bottom:1px solid #8c8c8c;border-right:1px solid #c8c8c8"></div>
<div class="a" style="left:652px;top:501px;width:761px;height:17px;background:#6b6b6b"></div>
<div class="a" style="left:652px;top:518px;width:761px;height:2px;background:#dcdcdc"></div>
<div class="a" style="left:653px;top:520px;width:759px;height:18px;background:#004f8b"></div>
<div class="t" style="left:652px;top:504px;width:65.5px;text-align:center;font-size:11px;font-weight:bold;color:#fff">Svc. Type</div>
<div class="t" style="left:719.5px;top:504px;width:80.25px;text-align:center;font-size:11px;font-weight:bold;color:#fff">Identifier</div>
<div class="t" style="left:801.75px;top:504px;width:73.25px;text-align:center;font-size:11px;font-weight:bold;color:#fff">Inv. Type</div>
<div class="t" style="left:877px;top:504px;width:156px;text-align:center;font-size:11px;font-weight:bold;color:#fff">Description</div>
<div class="t" style="left:1035px;top:504px;width:127px;text-align:center;font-size:11px;font-weight:bold;color:#fff">From Entity</div>
<div class="t" style="left:1164px;top:504px;width:96px;text-align:center;font-size:11px;font-weight:bold;color:#fff">To Entity</div>
<div class="t" style="left:1262px;top:504px;width:96px;text-align:center;font-size:11px;font-weight:bold;color:#fff">Vendor</div>
<div class="t" style="left:1360px;top:504px;width:52px;text-align:center;font-size:11px;font-weight:bold;color:#fff">Related</div>
<div class="a" style="left:717px;top:503px;width:2px;height:14px;background:#d8d8d8"></div>
<div class="a" style="left:799px;top:503px;width:2px;height:14px;background:#d8d8d8"></div>
<div class="a" style="left:874px;top:503px;width:2px;height:14px;background:#d8d8d8"></div>
<div class="a" style="left:1032px;top:503px;width:2px;height:14px;background:#d8d8d8"></div>
<div class="a" style="left:1161px;top:503px;width:2px;height:14px;background:#d8d8d8"></div>
<div class="a" style="left:1259px;top:503px;width:2px;height:14px;background:#d8d8d8"></div>
<div class="a" style="left:1357px;top:503px;width:2px;height:14px;background:#d8d8d8"></div>
<div class="a" style="left:719px;top:520px;width:1px;height:18px;background:#7f9cb8"></div>
<div class="a" style="left:801px;top:520px;width:1px;height:18px;background:#7f9cb8"></div>
<div class="a" style="left:876px;top:520px;width:1px;height:18px;background:#7f9cb8"></div>
<div class="a" style="left:1034px;top:520px;width:1px;height:18px;background:#7f9cb8"></div>
<div class="a" style="left:1163px;top:520px;width:1px;height:18px;background:#7f9cb8"></div>
<div class="a" style="left:1261px;top:520px;width:1px;height:18px;background:#7f9cb8"></div>
<div class="a" style="left:1359px;top:520px;width:1px;height:18px;background:#7f9cb8"></div>
<div class="t" style="left:655px;top:523px;font-size:11px;color:#fff">Wireless</div>
<div class="t" style="left:722px;top:523px;font-size:11px;color:#fff">8609138215</div>
<div class="t" style="left:804px;top:523px;font-size:11px;color:#fff">WIRELESS</div>
<div class="t" style="left:879px;top:523px;font-size:11px;color:#fff">ROBERT ALEXANDER TSR ...</div>
<div class="t" style="left:1264px;top:523px;font-size:11px;color:#fff">Verizon Wireless</div>
<div class="t" style="left:1362px;top:523px;font-size:11px;color:#fff">0</div>

<!-- action buttons -->
<div class="btn" style="left:971px;top:661px;width:96px;height:20px">Add Account</div>
<div class="btn" style="left:1069px;top:661px;width:97px;height:20px">Add Location</div>
<div class="btn" style="left:1169px;top:661px;width:67px;height:20px">Add Item</div>
<div class="btn" style="left:1239px;top:661px;width:71px;height:20px">New Item</div>
<div class="btn" style="left:1313px;top:661px;width:49px;height:20px">Modify</div>
<div class="btn" style="left:1365px;top:661px;width:62px;height:20px">Remove</div>
<!-- contacts -->
<div class="fs" style="left:636px;top:703px;width:415px;height:113px"></div>
<div class="lg" style="left:645px;top:698px">Contacts</div>
<div class="t" style="left:648px;top:723px;font-size:11px;color:#111">Vendor Contact:</div>
<div class="t" style="left:648px;top:748px;font-size:11px;color:#111">Primary Contact:</div>
<div class="t" style="left:648px;top:773px;font-size:11px;color:#111">Secondary Contact:</div>
<div class="a" style="left:768px;top:718px;width:250px;height:20px;background:#fff;border:1px solid #6a6a6a"></div>
<div class="t" style="left:771px;top:722px;font-size:11px;color:#111">Verizon Wireless Orders</div>
<svg class="a" style="left:999px;top:718px" width="17" height="18" viewBox="0 0 17 18"><circle cx="7.5" cy="7.8" r="5.6" stroke="#6e6e6e" stroke-width="1.5" fill="none"/><path d="M11.3 11.6 L14.6 14.9" stroke="#6e6e6e" stroke-width="2.6"/></svg>
<div class="a" style="left:768px;top:743px;width:250px;height:20px;background:#fff;border:1px solid #6a6a6a"></div>
<div class="t" style="left:771px;top:747px;font-size:11px;color:#111">Robert H. Alexander</div>
<svg class="a" style="left:999px;top:743px" width="17" height="18" viewBox="0 0 17 18"><circle cx="7.5" cy="7.8" r="5.6" stroke="#6e6e6e" stroke-width="1.5" fill="none"/><path d="M11.3 11.6 L14.6 14.9" stroke="#6e6e6e" stroke-width="2.6"/></svg>
<div class="a" style="left:768px;top:768px;width:250px;height:20px;background:#fff;border:1px solid #6a6a6a"></div>
<div class="t" style="left:771px;top:772px;font-size:11px;color:#111">STEVE ABELE</div>
<svg class="a" style="left:999px;top:768px" width="17" height="18" viewBox="0 0 17 18"><circle cx="7.5" cy="7.8" r="5.6" stroke="#6e6e6e" stroke-width="1.5" fill="none"/><path d="M11.3 11.6 L14.6 14.9" stroke="#6e6e6e" stroke-width="2.6"/></svg>

<!-- special instructions -->
<div class="fs" style="left:1069px;top:703px;width:345px;height:68px"></div>
<div class="lg" style="left:1079px;top:698px">Special Instructions</div>
<div class="a" style="left:1083px;top:715px;width:313px;height:42px;background:#fff;border:1px solid #555"></div>
<div class="a" style="left:1378px;top:716px;width:17px;height:40px;background:#f4f4f4"></div>
<svg class="a" style="left:1378px;top:716px" width="17" height="40" viewBox="0 0 17 40"><path d="M3 13 L8.5 8 L14 13 M3 28 L8.5 33 L14 28" stroke="#c4c4c4" stroke-width="1.6" fill="none"/></svg>
<!-- due date -->
<div class="fs" style="left:1068px;top:778px;width:345px;height:38px"></div>
<div class="lg" style="left:1077px;top:773px">Disconnect Due Date</div>
<div class="a" style="left:1182px;top:788px;width:110px;height:20px;background:#fff;border:1px solid #6a6a6a"></div>
<svg class="a" style="left:1274px;top:788px" width="17" height="17" viewBox="0 0 17 17"><rect x="1.5" y="3.5" width="14" height="12" fill="#f4f4f4" stroke="#777"/><rect x="1.5" y="3.5" width="14" height="3" fill="#999"/><g fill="#888"><rect x="3" y="8" width="2" height="1.5"/><rect x="6" y="8" width="2" height="1.5"/><rect x="9" y="8" width="2" height="1.5"/><rect x="12" y="8" width="2" height="1.5"/><rect x="3" y="11" width="2" height="1.5"/><rect x="6" y="11" width="2" height="1.5"/><rect x="9" y="11" width="2" height="1.5"/><rect x="12" y="11" width="2" height="1.5"/></g><rect x="4" y="1.5" width="1.5" height="3" fill="#777"/><rect x="11.5" y="1.5" width="1.5" height="3" fill="#777"/></svg>
<!-- bottom buttons -->
<div class="btn" style="left:1238px;top:879px;width:52px;height:20px">Submit</div>
<div class="btn" style="left:1293px;top:879px;width:56px;height:20px">&lt;&lt;Back</div>
<div class="btn" style="left:1352px;top:879px;width:54px;height:20px">Next&gt;&gt;</div>
<div class="btn" style="left:1409px;top:879px;width:38px;height:20px">Save</div>

<!-- scrollbar -->
<div class="a" style="left:1901px;top:108px;width:17px;height:930px;background:#f8f8f9;border-left:1px solid #fff"></div>
<div class="a" style="left:1918px;top:108px;width:2px;height:930px;background:linear-gradient(90deg,#c8c8c8,#a8a8a8)"></div>
<div class="a" style="left:0;top:108px;width:1920px;height:2px;background:linear-gradient(#b8b8b8,#cacaca)"></div>
<svg class="a" style="left:1901px;top:120px" width="19" height="20" viewBox="0 0 19 20"><path d="M3.4 15.3 L8.4 8.6 L13.4 15.3" stroke="#c2c2c2" stroke-width="2.6" fill="none" stroke-linejoin="miter"/></svg>
<svg class="a" style="left:1901px;top:1006px" width="19" height="20" viewBox="0 0 19 20"><path d="M3.4 6.7 L8.4 13.4 L13.4 6.7" stroke="#c2c2c2" stroke-width="2.6" fill="none"/></svg>

<!-- ============ TASKBAR ============ -->
<div class="a" style="left:0;top:1038px;width:1920px;height:2px;background:#c4c8cc"></div>
<div class="a" style="left:0;top:1040px;width:1920px;height:40px;background:linear-gradient(90deg,#0b2f72 0%,#0e3a88 12%,#0f3f8e 35%,#1a4e9c 55%,#12428f 70%,#0f3c86 85%,#0d3680 100%)"></div>
<div class="a" style="left:0;top:1040px;width:1920px;height:1px;background:#2a4a7a"></div>
<div class="a" style="left:0;top:1041px;width:1920px;height:1px;background:#5f84b8;opacity:.7"></div>
<!-- start orb -->
<div class="a" style="left:7px;top:1041px;width:39px;height:38px;border-radius:50%;background:radial-gradient(circle at 50% 85%,#7fe0ff 0%,#2aa8e8 18%,#1a5aa8 45%,#143a7a 70%,#2a5a9a 100%);border:1px solid #0a1a40;box-shadow:0 0 2px rgba(150,200,255,.6)"></div>
<div class="a" style="left:10px;top:1043px;width:33px;height:16px;border-radius:16px 16px 8px 8px;background:linear-gradient(rgba(255,255,255,.45),rgba(255,255,255,.05))"></div>
<svg class="a" style="left:15px;top:1048px" width="24" height="24" viewBox="0 0 24 24">
  <path d="M2.5 5 Q6.5 2.5 11 4.5 L9.8 10.8 Q5.5 9 1.5 11 Z" fill="#f5642a"/>
  <path d="M12.5 4.8 Q17 7 21.5 4.6 L20.3 10.9 Q16 13 11.3 11 Z" fill="#84c43c"/>
  <path d="M1.3 12.6 Q5.3 10.6 9.6 12.3 L8.4 18.6 Q4.3 16.8 0.2 18.8 Z" fill="#2aa4ec"/>
  <path d="M11.1 12.5 Q15.6 14.6 20.1 12.5 L18.9 18.8 Q14.5 21 9.9 18.8 Z" fill="#f8c81c"/>
</svg>
<!-- IE button -->
<div class="a" style="left:60px;top:1041px;width:58px;height:38px;border-radius:3px;background:linear-gradient(160deg,#c0cfe4 0%,#9cb2d2 40%,#7e98c0 60%,#8ea6ca 100%);border:1px solid #c8d6ea"></div>
<svg class="a" style="left:72px;top:1043px" width="34" height="34" viewBox="0 0 34 34">
  <path d="M8 19 H27 A10.5 10.5 0 1 0 25 25.5" fill="none" stroke="#1ea0e8" stroke-width="5"/>
  <path d="M8 19 H27" stroke="#1ea0e8" stroke-width="4"/>
  <path d="M4 31 Q0 26 9 15 Q20 3 30 2 Q34 4 28 12" fill="none" stroke="#f2b418" stroke-width="2.4"/>
</svg>
<!-- explorer -->
<svg class="a" style="left:134px;top:1045px" width="34" height="32" viewBox="0 0 34 32">
  <path d="M1 3 H11 L13 5 H31 V29 H1 Z" fill="#e8cf7a" stroke="#b8963a" stroke-width="0.8"/>
  <rect x="4" y="2" width="3" height="2" fill="#30b030"/><rect x="14" y="4" width="3" height="2" fill="#d03030"/><rect x="22" y="5" width="3" height="2" fill="#30a0e0"/>
  <path d="M1 9 H32 V29 H1 Z" fill="#f5e29a" stroke="#c8a848" stroke-width="0.8"/>
  <path d="M5 16 H27 V29 H23 V22 H9 V29 H5 Z" fill="#9ad0ee" stroke="#5a9ac8" stroke-width="0.8"/>
</svg>
<!-- media player -->
<svg class="a" style="left:198px;top:1048px" width="28" height="26" viewBox="0 0 28 26">
  <rect x="4" y="2" width="22" height="22" fill="#9ac0e0" stroke="#5a8ab8" stroke-width="0.8"/>
  <rect x="1" y="1" width="22" height="22" fill="#7aa8d8" stroke="#4a7ab0" stroke-width="0.8"/>
  <circle cx="11" cy="12" r="7.5" fill="#f07820"/>
  <path d="M8.5 8 L15.5 12 L8.5 16 Z" fill="#fff"/>
</svg>
<!-- word button -->
<div class="a" style="left:246px;top:1041px;width:58px;height:38px;border-radius:3px;background:linear-gradient(160deg,#3d63a8 0%,#2a5098 50%,#1f4690 100%);border:1px solid #6a8ac0"></div>
<svg class="a" style="left:258px;top:1044px" width="34" height="32" viewBox="0 0 34 32">
  <path d="M2 4 L18 1 V31 L2 28 Z" fill="#2b5aa8"/>
  <rect x="18" y="5" width="12" height="22" fill="#fff"/>
  <g stroke="#2b5aa8" stroke-width="1"><path d="M20 9 H28 M20 12 H28 M20 15 H28 M20 18 H28 M20 21 H28 M20 24 H28"/></g>
  <text x="4" y="22" font-family="Liberation Sans" font-size="11" font-weight="bold" fill="#fff">W</text>
</svg>
<!-- tray -->
<svg class="a" style="left:1715px;top:1050px" width="120" height="24" viewBox="1715 1050 120 24">
  <path d="M1719 1063 L1722.7 1059 L1726.4 1063 Z" fill="#fff"/>
  <path d="M1740 1055 L1747 1054 L1754.5 1055 V1061 Q1754 1066 1747 1069 Q1740 1066 1740 1061 Z" fill="#a82028" stroke="#e0d0d0" stroke-width="0.9"/>
  <text x="1743.3" y="1065" font-family="Liberation Sans" font-size="8" font-weight="bold" fill="#fff">M</text>
  <path d="M1767 1059 H1770 L1774.5 1054.5 V1068 L1770 1064 H1767 Z" fill="#e8e8e8" stroke="#333" stroke-width="0.5"/>
  <rect x="1792.5" y="1056.5" width="10" height="8" fill="#1a3a70" stroke="#eee" stroke-width="1.2"/>
  <path d="M1795 1067.5 H1801 M1789 1054 V1068.5" stroke="#eee" stroke-width="1.2"/>
  <path d="M1787.5 1054 V1058 H1791 V1054" fill="none" stroke="#eee" stroke-width="1"/>
  <path d="M1812.5 1054 V1069" stroke="#eee" stroke-width="1.4"/>
  <path d="M1813 1054.5 H1820 L1822 1056 H1825 V1061 H1813 Z" fill="#f0f0f0"/>
  <circle cx="1822" cy="1065" r="4.2" fill="#e03030" stroke="#fff" stroke-width="0.8"/>
  <path d="M1820 1063 L1824 1067 M1824 1063 L1820 1067" stroke="#fff" stroke-width="1.2"/>
</svg>
<div class="t" style="left:1845px;top:1047px;font-size:11.8px;color:#fff">11:28 AM</div>
<div class="t" style="left:1843px;top:1064px;font-size:11.8px;color:#fff">5/25/2016</div>
<div class="a" style="left:1906px;top:1041px;width:14px;height:38px;background:linear-gradient(160deg,#5070a8,#1f4080 60%,#2a5090);border:1px solid #6a88b8;border-right:none"></div>
</body></html>
